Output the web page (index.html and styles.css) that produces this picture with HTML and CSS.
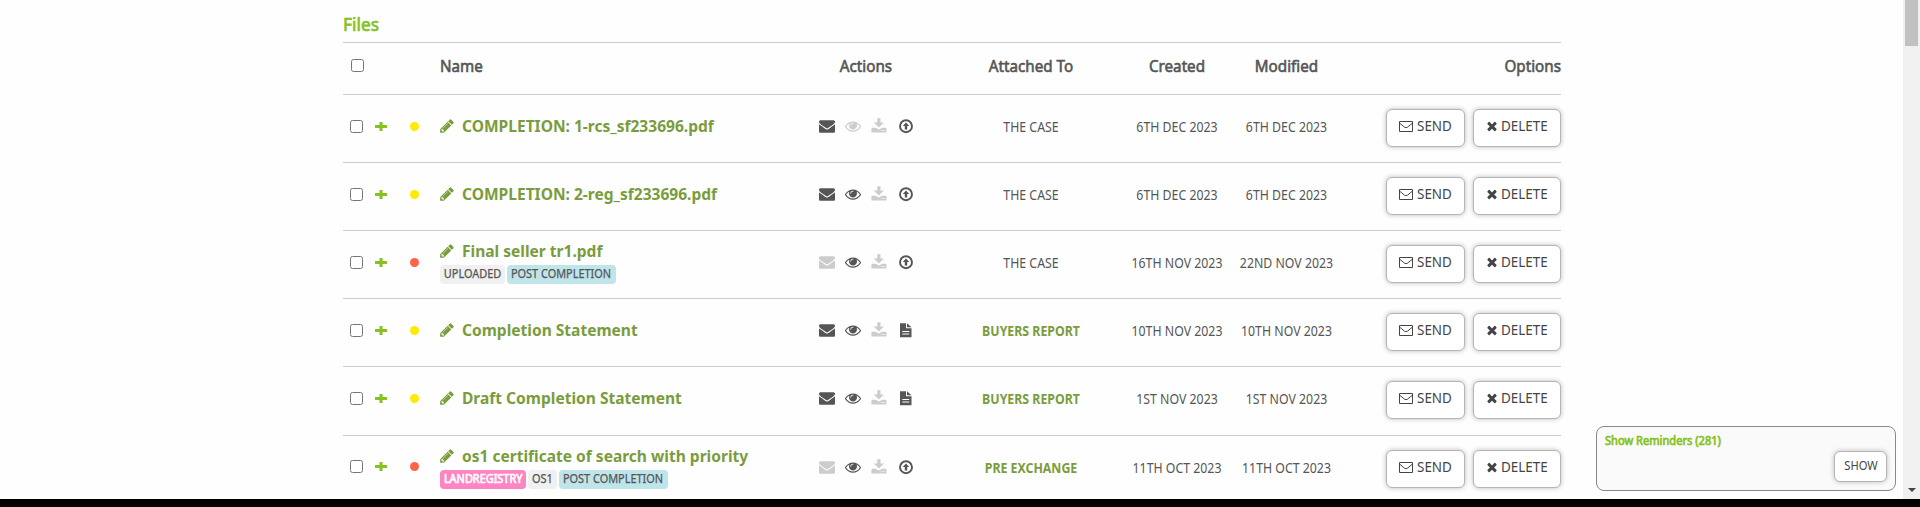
FILE: index.html
```html
<!DOCTYPE html>
<html lang="en">
<head>
<meta charset="utf-8">
<title>Files</title>
<link rel="stylesheet" href="styles.css">
</head>
<body>
<svg class="sprite" aria-hidden="true">
  <symbol id="mail" viewBox="0 0 1792 1792"><path d="M1792 710v794q0 66-47 113t-113 47h-1472q-66 0-113-47t-47-113v-794q44 49 101 87 362 246 497 345 57 42 92.500 65.500t94.500 48 110 24.500h2q51 0 110-24.500t94.500-48 92.500-65.500q170-123 498-345 57-39 100-87zm0-294q0 79-49 151t-122 123q-376 261-468 325-10 7-42.500 31t-54 38.500-52 32.500-57.500 27-50 9h-2q-23 0-50-9t-57.500-27-52-32.500-54-38.500-42.500-31q-91-64-262-182.500t-205-142.500q-62-42-117-115.500t-55-136.500q0-78 41.500-130t118.500-52h1472q65 0 112.500 47t47.500 113z"/></symbol>
  <symbol id="eye" viewBox="0 0 1792 1792"><path d="M1664 960q-152-236-381-353 61 104 61 225 0 185-131.500 316.500t-316.500 131.500-316.500-131.500-131.500-316.500q0-121 61-225-229 117-381 353 133 205 333.500 326.500t434.500 121.500 434.500-121.500 333.500-326.500zm-720-384q0-20-14-34t-34-14q-125 0-214.500 89.500t-89.500 214.500q0 20 14 34t34 14 34-14 14-34q0-86 61-147t147-61q20 0 34-14t14-34zm848 384q0 34-20 69-140 230-376.500 368.500t-499.500 138.500-499.500-139-376.500-368q-20-35-20-69t20-69q140-229 376.500-368t499.500-139 499.500 139 376.500 368q20 35 20 69z"/></symbol>
  <symbol id="download" viewBox="0 0 16 16"><path d="M6.200.300h3.300v4.300h3.500L7.900 9.600 2.700 4.600h3.500z"/><path fill-rule="evenodd" d="M1 9.700h3.800l2.100 1.500h1.900l2.100-1.500h3.800l.8.800v3.900H.4v-3.900zM9.900 12.300v.8h1.500v-.8zm2.500 0v.8h1.500v-.8z"/></symbol>
  <symbol id="up" viewBox="0 0 16 16"><circle cx="8" cy="8.200" r="6" fill="none" stroke="currentColor" stroke-width="1.900"/><path d="M8 4.500l3.300 3.400H9.200v3.500H6.800V7.900H4.700z"/></symbol>
  <symbol id="doc" viewBox="0 0 16 16"><path fill-rule="evenodd" d="M2 1.300h6v5h5.500v9H2zM9 1.300l4.500 4H9zM4.300 8.900v1h7v-1zm0 2.500v1h7v-1z"/></symbol>
  <symbol id="pencil" viewBox="0 0 1792 1792"><path d="M491 1536l91-91-235-235-91 91v107h128v128h107zm523-928q0-22-22-22-10 0-17 7l-542 542q-7 7-7 17 0 22 22 22 10 0 17-7l542-542q7-7 7-17zm-54-192l416 416-832 832h-416v-416zm683 96q0 53-37 90l-166 166-416-416 166-165q36-38 90-38 53 0 91 38l235 234q37 39 37 91z"/></symbol>
  <symbol id="cross" viewBox="0 0 1792 1792"><path d="M1490 1322q0 40-28 68l-136 136q-28 28-68 28t-68-28l-294-294-294 294q-28 28-68 28t-68-28l-136-136q-28-28-28-68t28-68l294-294-294-294q-28-28-28-68t28-68l136-136q28-28 68-28t68 28l294 294 294-294q28-28 68-28t68 28l136 136q28 28 28 68t-28 68l-294 294 294 294q28 28 28 68z"/></symbol>
  <symbol id="mail-o" viewBox="0 0 14 11"><path d="M.5.500h13v10H.5zM.7 2.200l4.700 3.900q1.600 1.300 3.200 0l4.700-3.900" fill="none" stroke="currentColor"/></symbol>
  <symbol id="plus" viewBox="0 0 12 9"><path d="M0 3h12v3H0zM4.500 0h3v9h-3z"/></symbol>
</svg>
<div class="viewport">
  <main class="files">
    <h2 class="title">Files</h2>
    <div class="row head">
      <div class="marks"><input type="checkbox" class="check all"></div>
      <div class="start">Name</div><div class="mid">Actions</div><div class="mid">Attached To</div><div class="mid">Created</div><div class="mid">Modified</div><div class="end">Options</div>
    </div>
    <div id="rows"></div>
  </main>
  <aside class="reminders">
    <div class="reminders-title">Show Reminders (281)</div>
    <button class="btn show"><span>SHOW</span></button>
  </aside>
  <div class="scroll"><div class="thumb"></div><div class="down"></div></div>
</div>
<script src="app.js"></script>
</body>
</html>
```
FILE: app.js
```js
const files = [
  { name: 'COMPLETION: 1-rcs_sf233696.pdf', dot: 'yellow', off: ['eye'], last: 'up', to: 'THE CASE', made: '6TH DEC 2023', mod: '6TH DEC 2023' },
  { name: 'COMPLETION: 2-reg_sf233696.pdf', dot: 'yellow', off: [], last: 'up', to: 'THE CASE', made: '6TH DEC 2023', mod: '6TH DEC 2023' },
  { name: 'Final seller tr1.pdf', dot: 'red', off: ['mail'], last: 'up', to: 'THE CASE', made: '16TH NOV 2023', mod: '22ND NOV 2023', tags: [['uploaded', 'UPLOADED'], ['post', 'POST COMPLETION']] },
  { name: 'Completion Statement', dot: 'yellow', off: [], last: 'doc', to: 'BUYERS REPORT', link: true, made: '10TH NOV 2023', mod: '10TH NOV 2023' },
  { name: 'Draft Completion Statement', dot: 'yellow', off: [], last: 'doc', to: 'BUYERS REPORT', link: true, made: '1ST NOV 2023', mod: '1ST NOV 2023' },
  { name: 'os1 certificate of search with priority', dot: 'red', off: ['mail'], last: 'up', to: 'PRE EXCHANGE', link: true, made: '11TH OCT 2023', mod: '11TH OCT 2023', tags: [['land', 'LANDREGISTRY'], ['os1', 'OS1'], ['post', 'POST COMPLETION']] }
];
const icon = (id, cls = '') => `<svg class="icon ${id} ${cls}"><use href="#${id}"/></svg>`;
document.getElementById('rows').innerHTML = files.map(f => `
  <div class="row">
    <div class="marks"><input type="checkbox" class="check">${icon('plus')}<span class="dot ${f.dot}"></span></div>
    <div class="name-cell">
      <a class="name">${icon('pencil')}<span>${f.name}</span></a>
      ${f.tags ? `<div class="tags">${f.tags.map(([c, t]) => `<span class="tag ${c}"><span>${t}</span></span>`).join('')}</div>` : ''}
    </div>
    <div class="actions">${['mail', 'eye', 'download', f.last].map(i => icon(i, f.off.includes(i) || i === 'download' ? 'off' : '')).join('')}</div>
    <div class="mid text ${f.link ? 'link' : ''}">${f.to}</div>
    <div class="mid text">${f.made}</div>
    <div class="mid text">${f.mod}</div>
    <div class="options"><button class="btn send">${icon('mail-o')}<span>SEND</span></button><button class="btn delete">${icon('cross')}<span>DELETE</span></button></div>
  </div>`).join('');
```
FILE: styles.css
```css
* { box-sizing: border-box; }
body { margin: 0; height: 507px; overflow: hidden; background: #000; font-family: "Noto Sans", sans-serif; color: #555; }
.sprite { position: absolute; width: 0; height: 0; }
.viewport { position: relative; height: 499px; overflow: hidden; background: #fefefe; }
.files { width: 1218px; margin-left: 343px; }
.title { margin: 0; height: 42px; padding-top: 12px; font-size: 18px; line-height: 25px; font-weight: 400; color: #86c220; transform: scaleX(.96); transform-origin: left; -webkit-text-stroke: .7px; }
.row { display: grid; grid-template-columns: 97px 352px 148px 182px 110px 109px 220px; align-items: center; height: 68.120px; border-top: 1px solid #ccc; }
.head { height: 52px; font-size: 16px; -webkit-text-stroke: .6px; padding-bottom: 5px; }
.head > div { white-space: nowrap; }
.head .start { transform: scaleX(.95); transform-origin: left; }
.head .mid { transform: scaleX(.95); }
.head .end { transform: scaleX(.95); transform-origin: right; }
.mid { text-align: center; }
.end { text-align: right; }
.marks { display: flex; align-items: center; padding: 0 0 5px 7px; }
.head .marks { padding-bottom: 2px; }
.check { width: 13px; height: 13px; margin: 0; }
.check.all { margin-left: 1px; }
.icon { display: block; width: 16px; height: 16px; fill: currentColor; flex: none; }
.icon.plus { width: 12px; height: 9px; margin-left: 12px; color: #86c220; }
.dot { width: 9px; height: 9px; border-radius: 50%; margin-left: 23px; }
.yellow { background: #ffeb00; }
.red { background: #ff6347; }
.name { display: flex; align-items: center; color: #7a9c3d; font-size: 16px; line-height: 22px; font-weight: 700; white-space: nowrap; }
.name-cell { padding-bottom: 5px; }
.icon.pencil { margin: 0 6px 0 -1px; }
.name span { margin-left: 1px; transform: scaleX(.971); transform-origin: left; }
.tags { display: flex; gap: 2px; margin-top: 3px; }
.tag { display: flex; justify-content: center; height: 19px; border-radius: 4px; font-size: 12px; line-height: 18px; white-space: nowrap; -webkit-text-stroke: .25px; }
.tag span { flex: none; transform: scaleX(.91); }
.uploaded { width: 65px; background: #f0f0f0; }
.post { width: 109px; background: #bfe5ea; }
.land { width: 86px; background: #ff85c2; color: #fff; -webkit-text-stroke: .7px; }
.os1 { width: 29px; background: #f0f0f0; }
.actions { display: flex; justify-content: center; gap: 10.200px; padding: 0 0 5px .8px; }
.off { color: #ccc; }
.text { font-size: 14px; white-space: nowrap; padding-bottom: 4px; transform: scaleX(.88); }
.link { color: #7a9c3d; font-weight: 700; }
.options { display: flex; justify-content: flex-end; gap: 8px; padding-bottom: 1px; }
.btn { display: flex; justify-content: center; height: 38px; padding: 6px 0 0; border: 1px solid #b5b5b5; border-radius: 6px; background: #fff; box-shadow: 0 0 5px #bbb; font: 14px/20px "Noto Sans", sans-serif; color: #444; }
.btn span { transform: scaleX(.96); transform-origin: left; }
.send { width: 79px; padding-left: 1px; }
.delete { width: 88px; }
.icon.mail-o { width: 14px; height: 11px; margin: 5px 4px 0 0; }
.icon.cross { width: 14px; height: 14px; margin: 3px 2px 0 0; }
.reminders { position: absolute; left: 1596px; top: 426px; width: 300px; height: 65px; border: 1px solid #888; border-radius: 8px; background: #fafafa; padding: 5px 8px; display: flex; flex-direction: column; }
.reminders-title { font-size: 12px; line-height: 17px; transform: scaleX(.925); transform-origin: left; color: #86c220; -webkit-text-stroke: .7px; }
.show { align-self: flex-end; width: 53px; height: 31px; margin-top: 2px; padding-top: 4px; font-size: 12px; }
.show span { transform: scaleX(.93); transform-origin: center; }
.scroll { position: absolute; right: 0; top: 0; width: 17px; height: 499px; background: #f0f0f0; display: flex; flex-direction: column; justify-content: space-between; align-items: center; padding-bottom: 7px; }
.thumb { width: 13px; height: 46px; background: #c1c1c1; }
.down { border: 4px solid transparent; border-top-color: #444; border-bottom: 0; }
```
